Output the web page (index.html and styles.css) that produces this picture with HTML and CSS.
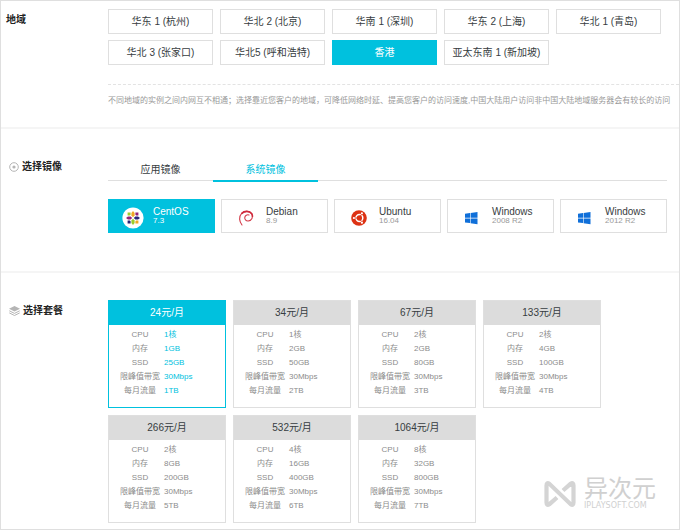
FILE: index.html
```html
<!DOCTYPE html>
<html lang="zh-CN">

<head>
    <meta charset="UTF-8">
    <meta name="viewport" content="width=device-width, initial-scale=1.0">
    <title>选择套餐</title>
    <link rel="stylesheet" href="styles.css">
</head>

<body>
    <main class="page">
        <section class="section">
            <h2 class="section-title">地域</h2>
            <div class="section-body">
                <div class="region-grid">
                    <button type="button" class="option">华东 1 (杭州)</button>
                    <button type="button" class="option">华北 2 (北京)</button>
                    <button type="button" class="option">华南 1 (深圳)</button>
                    <button type="button" class="option">华东 2 (上海)</button>
                    <button type="button" class="option">华北 1 (青岛)</button>
                    <button type="button" class="option">华北 3 (张家口)</button>
                    <button type="button" class="option">华北5 (呼和浩特)</button>
                    <button type="button" class="option selected">香港</button>
                    <button type="button" class="option">亚太东南 1 (新加坡)</button>
                </div>
                <p class="region-note">不同地域的实例之间内网互不相通；选择靠近您客户的地域，可降低网络时延、提高您客户的访问速度,中国大陆用户访问非中国大陆地域服务器会有较长的访问</p>
            </div>
        </section>

        <section class="section">
            <h2 class="section-title with-icon">
                <svg width="10" height="10" viewBox="0 0 10 10" aria-hidden="true">
                    <circle cx="5" cy="5" r="4.3" fill="none" stroke="#b5b5b5" stroke-width="1"/>
                    <circle cx="5" cy="5" r="1.6" fill="#b5b5b5"/>
                </svg>
                选择镜像
            </h2>
            <div class="section-body">
                <nav class="tabs">
                    <button type="button" class="tab">应用镜像</button>
                    <button type="button" class="tab active">系统镜像</button>
                </nav>
                <div class="image-grid">
                    <button type="button" class="option image selected">
                        <svg width="22" height="22" viewBox="0 -2 22 22" aria-hidden="true">
                            <circle cx="11" cy="11" r="10.6" fill="#fff"/>
                            <path d="M11 4l1.600 2v2.600L11 10.200 9.400 8.600V6z" fill="#efa724"/>
                            <path d="M11 18l1.600-2v-2.600L11 11.800l-1.600 1.600V16z" fill="#9ccd2a"/>
                            <path d="M4 11l2-1.600h2.600L10.200 11l-1.600 1.600H6z" fill="#932279"/>
                            <path d="M18 11l-2-1.600h-2.600L11.800 11l1.600 1.600H16z" fill="#262577"/>
                            <path d="M5.600 5.600h3v2.200L7.800 8.600H5.600z" fill="#9ccd2a"/>
                            <path d="M16.400 5.600h-3v2.200l.8.8h2.200z" fill="#932279"/>
                            <path d="M5.600 16.400h3v-2.200l-.8-.8H5.600z" fill="#262577"/>
                            <path d="M16.400 16.400h-3v-2.200l.8-.8h2.200z" fill="#efa724"/>
                        </svg>
                        <span class="image-text">
                            <span class="image-name">CentOS</span>
                            <span class="image-version">7.3</span>
                        </span>
                    </button>
                    <button type="button" class="option image">
                        <svg width="22" height="22" viewBox="0 -2 22 22" aria-hidden="true">
                            <path d="M7 18C4.200 14.500 3.600 9.600 6.500 6.600 9.500 3.600 14.500 3.600 16.800 6.800c1.900 3-.2 7-3.600 7.200-2.400.1-3.700-1.700-3.400-3.600.3-1.900 2.200-3.200 4.200-2.400" fill="none" stroke="#d33a48" stroke-width="1.100" stroke-linecap="round"/>
                            <path d="M6.500 6.600C9.500 3.600 14.500 3.600 16.800 6.800q.8 1.400.6 3" fill="none" stroke="#cf2a3c" stroke-width="1.600"/>
                        </svg>
                        <span class="image-text">
                            <span class="image-name">Debian</span>
                            <span class="image-version">8.9</span>
                        </span>
                    </button>
                    <button type="button" class="option image">
                        <svg width="22" height="22" viewBox="0 -2 22 22" aria-hidden="true">
                            <circle cx="11" cy="11" r="7.800" fill="#dd3214"/>
                            <circle cx="11.400" cy="11" r="3.400" fill="none" stroke="#fff" stroke-width="1.500"/>
                            <path d="M11.400 11L7.500 11M11.400 11l2.300-4M11.400 11l2.300 4" stroke="#dd3214" stroke-width="1"/>
                            <circle cx="5.900" cy="11" r="1.100" fill="#fff"/>
                            <circle cx="13.900" cy="6.300" r="1.100" fill="#fff"/>
                            <circle cx="13.900" cy="15.700" r="1.100" fill="#fff"/>
                        </svg>
                        <span class="image-text">
                            <span class="image-name">Ubuntu</span>
                            <span class="image-version">16.04</span>
                        </span>
                    </button>
                    <button type="button" class="option image">
                        <svg width="22" height="22" viewBox="0 -2 22 22" aria-hidden="true">
                            <path d="M4 6.800l5-.7v4.700H4zM9.600 6l6.900-1v5.800H9.600zM4 11.400h5v4.700l-5-.7zM9.600 11.400h6.900v5.800l-6.900-1z" fill="#0f6fd9"/>
                        </svg>
                        <span class="image-text">
                            <span class="image-name">Windows</span>
                            <span class="image-version">2008 R2</span>
                        </span>
                    </button>
                    <button type="button" class="option image">
                        <svg width="22" height="22" viewBox="0 -2 22 22" aria-hidden="true">
                            <path d="M4 6.800l5-.7v4.700H4zM9.600 6l6.900-1v5.800H9.600zM4 11.400h5v4.700l-5-.7zM9.600 11.400h6.900v5.800l-6.900-1z" fill="#0f6fd9"/>
                        </svg>
                        <span class="image-text">
                            <span class="image-name">Windows</span>
                            <span class="image-version">2012 R2</span>
                        </span>
                    </button>
                </div>
            </div>
        </section>

        <section class="section">
            <h2 class="section-title with-icon">
                <svg width="11" height="10" viewBox="0 0 11 10" aria-hidden="true">
                    <path d="M5.500 0L11 2.700 5.500 5.400 0 2.700z" fill="#b5b5b5"/>
                    <path d="M.3 4.800l5.200 2.600 5.200-2.600M.3 6.900l5.200 2.600 5.200-2.600" fill="none" stroke="#b5b5b5" stroke-width="1"/>
                </svg>
                选择套餐
            </h2>
            <div class="section-body">
                <div class="plan-list" id="plan-list">
                    <!-- Plans are added by the script below -->
                </div>
            </div>
        </section>

        <div class="watermark">
            <svg width="32" height="28" viewBox="0 0 32 28" aria-hidden="true">
                <path d="M13 17.500L5.400 24.200Q2.500 26 2.500 22.500V5.500Q2.500 2 5.400 3.800L26.600 24.200Q29.500 26 29.500 22.500V5.500Q29.500 2 26.600 3.800L19 10.500" fill="none" stroke="#d4d4d4" stroke-width="4.200"/>
            </svg>
            <div class="watermark-text">
                <span class="watermark-name">异次元</span>
                <span class="watermark-site">IPLAYSOFT.COM</span>
            </div>
        </div>
    </main>

    <script>
        const plans = [
            {price: 24, cpu: 1, memory: "1GB", ssd: "25GB", traffic: "1TB", selected: true},
            {price: 34, cpu: 1, memory: "2GB", ssd: "50GB", traffic: "2TB"},
            {price: 67, cpu: 2, memory: "2GB", ssd: "80GB", traffic: "3TB"},
            {price: 133, cpu: 2, memory: "4GB", ssd: "100GB", traffic: "4TB"},
            {price: 266, cpu: 2, memory: "8GB", ssd: "200GB", traffic: "5TB"},
            {price: 532, cpu: 4, memory: "16GB", ssd: "400GB", traffic: "6TB"},
            {price: 1064, cpu: 8, memory: "32GB", ssd: "800GB", traffic: "7TB"},
        ];

        const planList = document.getElementById("plan-list");

        plans.forEach(plan => {
            const card = document.createElement("article");
            card.className = plan.selected ? "plan selected" : "plan";
            card.innerHTML = `
                <h3 class="plan-price">${plan.price}元/月</h3>
                <dl class="plan-specs">
                    <dt>CPU</dt><dd>${plan.cpu}核</dd>
                    <dt>内存</dt><dd>${plan.memory}</dd>
                    <dt>SSD</dt><dd>${plan.ssd}</dd>
                    <dt>限峰值带宽</dt><dd>30Mbps</dd>
                    <dt>每月流量</dt><dd>${plan.traffic}</dd>
                </dl>
            `;
            planList.appendChild(card);
        });

        // Only one option per group can be selected
        function pickOne(selector, className) {
            document.querySelectorAll(selector).forEach((item, i, items) => {
                item.addEventListener("click", () => {
                    items.forEach(other => other.classList.remove(className));
                    item.classList.add(className);
                });
            });
        }

        pickOne(".region-grid .option", "selected");
        pickOne(".tab", "active");
        pickOne(".image-grid .option", "selected");
        pickOne(".plan", "selected");
    </script>
</body>

</html>
```
FILE: styles.css
```css
:root {
    --primary-color: #00c1de;
    --border-color: #dfdfdf;
    --text-color: #373d41;
    --muted-color: #999;
}

* {
    box-sizing: border-box;
    margin: 0;
    padding: 0;
}

body {
    font-family: "Liberation Sans", "Noto Sans CJK SC", sans-serif;
    font-size: 10px;
    color: var(--text-color);
    background-color: #fff;
}

button {
    font: inherit;
    color: inherit;
    background: none;
    border: none;
    cursor: pointer;
}

.page {
    position: relative;
    min-height: 100vh;
    border: 1px solid var(--border-color);
}

.section {
    display: grid;
    grid-template-columns: 107px minmax(0, 1fr);
    padding: 27px 0 38px;
    border-bottom: 2px solid #f5f5f5;
}

.section:first-child {
    padding: 8px 0 21px;
}

.section:last-of-type {
    padding-bottom: 5px;
    border-bottom: none;
}

.section-title {
    padding: 4px 0 0 5px;
    font-size: 10px;
    line-height: 14px;
    color: #222;
}

.with-icon {
    display: flex;
    align-items: center;
    align-self: start;
    gap: 3px;
    padding-left: 8px;
}

/* Regions */
.option {
    border: 1px solid var(--border-color);
    background-color: #fff;
}

.option.selected {
    border-color: var(--primary-color);
    background-color: var(--primary-color);
    color: #fff;
}

.region-grid {
    display: grid;
    grid-template-columns: repeat(5, 1fr);
    gap: 6px 7px;
    margin-right: 18px;
}

.region-grid .option {
    height: 25px;
    padding-top: 1px;
    line-height: 22px;
    white-space: nowrap;
}

.region-note {
    margin-top: 19px;
    padding-top: 10px;
    border-top: 1px dashed #e3e3e3;
    overflow: hidden;
    font-size: 8px;
    line-height: 11px;
    white-space: nowrap;
    color: var(--muted-color);
}

/* Images */
.tabs {
    display: flex;
    margin: 3px 12px 18px 0;
    border-bottom: 1px solid var(--border-color);
}

.tab {
    width: 105px;
    margin-bottom: -2px;
    border-bottom: 2px solid transparent;
    line-height: 21px;
}

.tab.active {
    border-color: var(--primary-color);
    color: var(--primary-color);
}

.image-grid {
    display: grid;
    grid-template-columns: repeat(5, 1fr);
    gap: 6px;
    margin-right: 12px;
}

.image {
    display: flex;
    align-items: center;
    gap: 9px;
    height: 34px;
    padding-left: 13px;
    text-align: left;
}

.image svg {
    flex: none;
    overflow: visible;
}

.image-name,
.image-version {
    display: block;
    white-space: nowrap;
}

.image-name {
    line-height: 10px;
}

.image-version {
    font-size: 8px;
    line-height: 8px;
    color: var(--muted-color);
}

.selected .image-version {
    color: #fff;
}

/* Plans */
.plan-list {
    display: flex;
    flex-wrap: wrap;
    gap: 7px;
}

.plan {
    width: 118px;
    border: 1px solid var(--border-color);
    cursor: pointer;
}

.plan-price {
    background-color: #dcdcdc;
    font-size: 10px;
    font-weight: normal;
    line-height: 24px;
    text-align: center;
}

.plan-specs {
    display: grid;
    grid-template-columns: 42px 1fr;
    column-gap: 3px;
    padding: 3px 0 9px 10px;
    font-size: 8px;
    line-height: 14px;
    white-space: nowrap;
    color: #8c8c8c;
}

.plan-specs dt {
    text-align: center;
}

.plan.selected {
    border-color: var(--primary-color);
}

.selected .plan-price {
    background-color: var(--primary-color);
    color: #fff;
}

.selected dd {
    color: var(--primary-color);
}

.watermark {
    position: absolute;
    right: 23px;
    bottom: 18px;
    display: flex;
    align-items: center;
    gap: 8px;
    color: #d0d0d0;
}

.watermark-name,
.watermark-site {
    display: block;
}

.watermark-name {
    font-size: 24px;
    line-height: 24px;
}

.watermark-site {
    font-family: "DejaVu Sans", sans-serif;
    font-size: 8px;
    line-height: 10px;
}
```
